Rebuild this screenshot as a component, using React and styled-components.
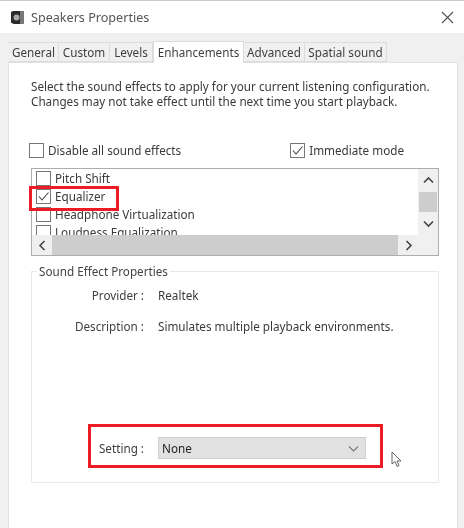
import styled, { createGlobalStyle } from 'styled-components';

const GlobalStyle = createGlobalStyle`
    html, body {
        margin: 0;
        padding: 0;
        background: #fff;
    }
    body {
        font-family: "Noto Sans", "Open Sans", "Liberation Sans", sans-serif;
        font-size: 11.7px;
        color: #3a3a3a;
    }
`;

const Window = styled.div`
    position: relative;
    width: 464px;
    height: 528px;
    overflow: hidden;
    display: flex;
    flex-direction: column;
    border-top: 1px solid #c9c9c9;
    box-sizing: border-box;
    background: #f0f0f0;
    filter: blur(0.3px);
`;

const TitleBar = styled.div`
    height: 32px;
    flex: none;
    background: #fff;
    display: flex;
    align-items: center;
    padding: 0 10px 0 10px;
    gap: 6px;
    font-size: 12.6px;
    color: #555;
`;

const TitleText = styled.div`
    flex: 1;
`;

const TabStrip = styled.div`
    flex: none;
    height: 29px;
    padding: 8px 0 0 9px;
    box-sizing: border-box;
    display: flex;
    align-items: flex-end;
`;

const Tab = styled.div`
    width: ${props => props.$width}px;
    height: ${props => props.$active ? 22 : 20}px;
    box-sizing: border-box;
    display: flex;
    align-items: center;
    justify-content: center;
    white-space: nowrap;
    background: ${props => props.$active ? '#fff' : '#f0f0f0'};
    border: 1px solid #dcdcdc;
    border-left-width: ${props => props.$active ? 1 : 0}px;
    border-bottom-width: ${props => props.$active ? 0 : 1}px;
    color: #3f3f3f;
    padding-bottom: ${props => props.$active ? 2 : 0}px;
    position: relative;
    top: ${props => props.$active ? 1 : 0}px;
`;

const Panel = styled.div`
    flex: 1;
    margin: 0 6px 0 8px;
    background: #fff;
    border: 1px solid #e2e2e2;
    border-bottom: 0;
    padding: 16px 18px 0 22px;
    display: flex;
    flex-direction: column;
`;

const Intro = styled.p`
    margin: 0;
    line-height: 15px;
    white-space: nowrap;
`;

const OptionRow = styled.div`
    display: flex;
    justify-content: space-between;
    margin: 33px 0 0 -2px;
    padding-right: 35px;
`;

const CheckLabel = styled.div`
    display: flex;
    align-items: center;
    gap: ${props => props.$gap || 4}px;
    height: ${props => props.$height || 16}px;
    white-space: nowrap;
`;

const Box = styled.div`
    width: 15px;
    height: 15px;
    flex: none;
    box-sizing: border-box;
    border: 1px solid #777;
    background: #fff;
    display: flex;
    align-items: center;
    justify-content: center;
`;

const ListFrame = styled.div`
    margin-top: 10px;
    height: 88px;
    box-sizing: border-box;
    border: 1px solid #adadad;
    display: grid;
    grid-template-columns: 1fr 20px;
    grid-template-rows: 66px 20px;
    background: #f0f0f0;
`;

const ListItems = styled.div`
    background: #fff;
    overflow: hidden;
    padding: 0 0 0 4px;
`;

const VScroll = styled.div`
    display: flex;
    flex-direction: column;
    align-items: center;
    justify-content: space-between;
    background: #f0f0f0;
`;

const ScrollButton = styled.div`
    width: 20px;
    height: ${props => props.$size || 20}px;
    flex: none;
    display: flex;
    align-items: center;
    justify-content: center;
`;

const VThumb = styled.div`
    width: 18px;
    height: 20px;
    flex: none;
    background: #cdcdcd;
`;

const HScroll = styled.div`
    display: flex;
    align-items: stretch;
    background: #f0f0f0;
`;

const HThumb = styled.div`
    flex: 1;
    background: #cdcdcd;
`;

const Corner = styled.div`
    background: #f0f0f0;
`;

const Group = styled.fieldset`
    margin: 8px 0 0;
    padding: 0;
    height: 219px;
    box-sizing: border-box;
    border: 1px solid #e8e8e8;
    min-width: 0;
    display: flex;
    flex-direction: column;
`;

const Legend = styled.legend`
    margin-left: 5px;
    padding: 0 2px;
    line-height: 15px;
    color: #444;
`;

const Field = styled.div`
    display: grid;
    grid-template-columns: 112px 1fr;
    column-gap: 14px;
    align-items: center;
    margin-top: ${props => props.$top}px;
    white-space: nowrap;
`;

const FieldLabel = styled.div`
    text-align: right;
    color: #3f3f3f;
    position: relative;
`;

const Select = styled.div`
    width: 208px;
    height: 22px;
    box-sizing: border-box;
    background: #e1e1e1;
    border: 1px solid #cfcfcf;
    display: flex;
    align-items: center;
    justify-content: space-between;
    padding: 0 6px 0 3px;
    color: #222;
`;

const Highlight = styled.div`
    position: absolute;
    left: ${props => props.$x}px;
    top: ${props => props.$y}px;
    width: ${props => props.$w}px;
    height: ${props => props.$h}px;
    box-sizing: border-box;
    border: 3px solid #ed1c24;
`;

const Cursor = styled.svg`
    position: absolute;
    left: 391px;
    top: 450px;
`;

const Check = () => (
    <svg width="13" height="13" viewBox="0 0 13 13" fill="none" stroke="#444" strokeWidth="1.1">
        <path d="M2 6.5 L5 10 L11.5 2.5" />
    </svg>
);

const Chevron = ({ d, color = '#444', width = 1.6 }) => (
    <svg width="11" height="11" viewBox="0 0 11 11" fill="none" stroke={color} strokeWidth={width}>
        <path d={d} />
    </svg>
);

const items = [
    { name: 'Pitch Shift' },
    { name: 'Equalizer', checked: true },
    { name: 'Headphone Virtualization' },
    { name: 'Loudness Equalization' },
];

const tabs = [
    { name: 'General', width: 50 },
    { name: 'Custom', width: 51 },
    { name: 'Levels', width: 43 },
    { name: 'Enhancements', width: 91, active: true },
    { name: 'Advanced', width: 61 },
    { name: 'Spatial sound', width: 82 },
];

export default function App() {
    return (
        <Window>
            <GlobalStyle />
            <TitleBar>
                <svg width="15" height="15" viewBox="0 0 15 15">
                    <path d="M1 2 L4 1 H14 V14 H4 L1 12.5 Z" fill="#777" />
                    <path d="M1 2 L4 1 H10 V14 H4 L1 12.5 Z" fill="#2b2b2b" />
                    <circle cx="6.5" cy="7.5" r="3" fill="#aaa" />
                </svg>
                <TitleText>Speakers Properties</TitleText>
                <svg width="13" height="13" viewBox="0 0 13 13" stroke="#555" strokeWidth="1.1" fill="none">
                    <path d="M1 1 L12 12 M12 1 L1 12" />
                </svg>
            </TitleBar>
            <TabStrip>
                {tabs.map(tab => (
                    <Tab key={tab.name} $width={tab.width} $active={tab.active}>{tab.name}</Tab>
                ))}
            </TabStrip>
            <Panel>
                <Intro>
                    Select the sound effects to apply for your current listening configuration.<br />
                    Changes may not take effect until the next time you start playback.
                </Intro>
                <OptionRow>
                    <CheckLabel><Box />Disable all sound effects</CheckLabel>
                    <CheckLabel><Box><Check /></Box>Immediate mode</CheckLabel>
                </OptionRow>
                <ListFrame>
                    <ListItems>
                        {items.map(item => (
                            <CheckLabel key={item.name} $height={18} $gap={4}>
                                <Box>{item.checked && <Check />}</Box>
                                {item.name}
                            </CheckLabel>
                        ))}
                    </ListItems>
                    <VScroll>
                        <ScrollButton $size={23}><Chevron d="M1 7.5 L5.5 3 L10 7.5" /></ScrollButton>
                        <VThumb />
                        <ScrollButton $size={23}><Chevron d="M1 3.5 L5.5 8 L10 3.5" /></ScrollButton>
                    </VScroll>
                    <HScroll>
                        <ScrollButton><Chevron d="M7.5 1 L3 5.5 L7.5 10" /></ScrollButton>
                        <HThumb />
                        <ScrollButton><Chevron d="M3.5 1 L8 5.5 L3.5 10" /></ScrollButton>
                    </HScroll>
                    <Corner />
                </ListFrame>
                <Group>
                    <Legend>Sound Effect Properties</Legend>
                    <Field $top={8}>
                        <FieldLabel>Provider :</FieldLabel>
                        <div>Realtek</div>
                    </Field>
                    <Field $top={15}>
                        <FieldLabel>Description :</FieldLabel>
                        <div>Simulates multiple playback environments.</div>
                    </Field>
                    <Field $top={103}>
                        <FieldLabel>Setting :</FieldLabel>
                        <Select>
                            None
                            <Chevron d="M1 3.5 L5.5 8 L10 3.5" color="#777" width={1.1} />
                        </Select>
                    </Field>
                </Group>
            </Panel>
            <Highlight $x={29} $y={185} $w={90} $h={25} />
            <Highlight $x={88} $y={423} $w={295} $h={44} />
            <Cursor width="11" height="17" viewBox="0 0 11 17" fill="#fff" stroke="#555" strokeWidth="0.9">
                <path d="M1 1 V13 L4 10.5 L6 15.5 L8 14.5 L6 10 H10 Z" />
            </Cursor>
        </Window>
    );
}
